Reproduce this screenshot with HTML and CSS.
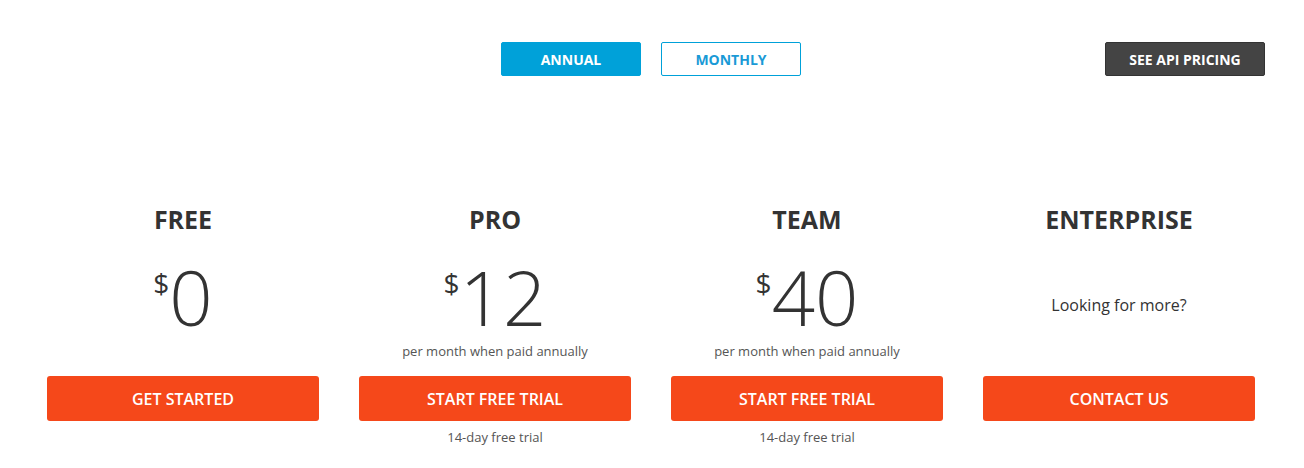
FILE: index.html
```html
<!DOCTYPE html>
<html lang="en">
<head>
  <meta charset="UTF-8">
  <meta name="viewport" content="width=device-width, initial-scale=1.0">
  <title>Pricing</title>
  <link rel="stylesheet" href="styles.css">
</head>
<body>
  <div class="topbar">
    <div></div>
    <div class="toggle">
      <button class="toggle-btn active">ANNUAL</button>
      <button class="toggle-btn">MONTHLY</button>
    </div>
    <button class="api-btn">SEE API PRICING</button>
  </div>

  <div class="plans">
    <div class="plan">
      <h2>FREE</h2>
      <div class="price-area">
        <div class="price"><span class="currency">$</span><span class="amount">0</span></div>
      </div>
      <button class="cta">GET STARTED</button>
    </div>

    <div class="plan">
      <h2>PRO</h2>
      <div class="price-area">
        <div class="price"><span class="currency">$</span><span class="amount">12</span></div>
        <div class="note">per month when paid annually</div>
      </div>
      <button class="cta">START FREE TRIAL</button>
      <div class="note trial">14-day free trial</div>
    </div>

    <div class="plan">
      <h2>TEAM</h2>
      <div class="price-area">
        <div class="price"><span class="currency">$</span><span class="amount">40</span></div>
        <div class="note">per month when paid annually</div>
      </div>
      <button class="cta">START FREE TRIAL</button>
      <div class="note trial">14-day free trial</div>
    </div>

    <div class="plan">
      <h2>ENTERPRISE</h2>
      <div class="price-area">
        <div class="more">Looking for more?</div>
      </div>
      <button class="cta">CONTACT US</button>
    </div>
  </div>
</body>
</html>
```

FILE: styles.css
```css
:root { --blue: #00a1d9; --orange: #f5481a; --text: #333333; --muted: #555555; }
body { font-family: "Open Sans", sans-serif; margin: 0; color: var(--text); background: #ffffff; }
button { font-family: inherit; cursor: pointer; }

.topbar { display: grid; grid-template-columns: 1fr auto 1fr; align-items: center; padding: 42px 39px 0 37px; }
.toggle { display: flex; gap: 20px; }
.toggle-btn { width: 140px; height: 34px; font-size: 14px; font-weight: 700; border: 1px solid var(--blue); border-radius: 2px; background: #ffffff; color: #1a9ad6; }
.toggle-btn.active { background: var(--blue); color: #ffffff; }
.api-btn { justify-self: end; width: 160px; height: 34px; font-size: 14px; font-weight: 700; color: #ffffff; background: #444444; border: 1px solid #333333; border-radius: 2px; }

.plans { display: grid; grid-template-columns: repeat(4, 272px); gap: 40px; padding: 127px 0 0 47px; }
.plan { display: flex; flex-direction: column; align-items: center; }
.plan h2 { margin: 0; font-size: 25px; line-height: 32px; font-weight: 700; }
.price-area { display: flex; flex-direction: column; align-items: center; height: 101px; margin-top: 24px; }
.price { display: flex; align-items: flex-start; height: 76px; }
.currency { font-size: 28px; line-height: 28px; font-weight: 400; margin-top: 10px; }
.amount { font-size: 76px; line-height: 76px; font-weight: 300; }
.note { font-size: 13px; line-height: 18px; color: var(--muted); margin-top: 7px; }
.more { font-size: 16px; line-height: 22px; padding-top: 35px; }
.cta { width: 272px; height: 45px; margin-top: 16px; border: none; border-radius: 3px; background: var(--orange); color: #ffffff; font-size: 16px; font-weight: 600; }
.trial { margin-top: 7px; }
```
